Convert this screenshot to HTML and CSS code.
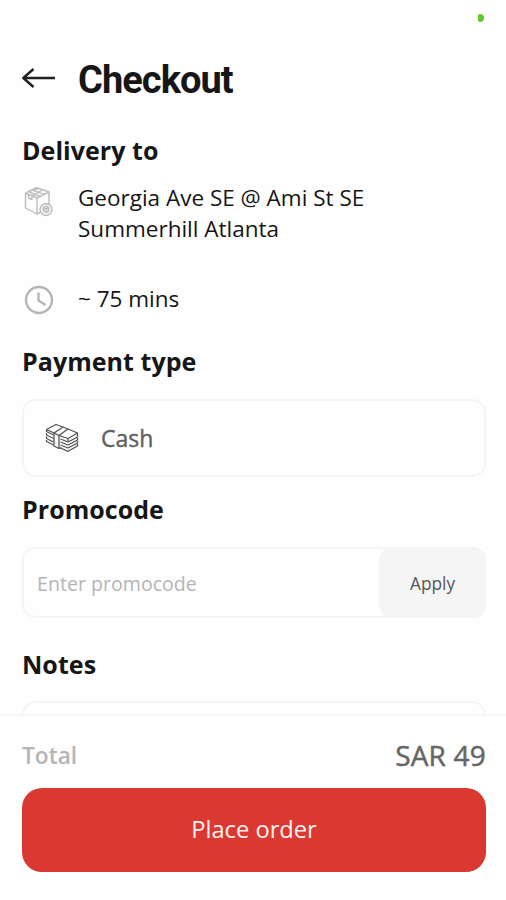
FILE: index.html
```html
<!DOCTYPE html>
<html lang="en">
<head>
<meta charset="utf-8">
<title>Checkout</title>
<link rel="stylesheet" href="styles.css">
</head>
<body>
<div class="screen">
  <div class="status"><span class="status-dot"></span></div>
  <main class="content">
    <header class="header">
      <svg class="back" width="34" height="22" viewBox="0 0 34 22"><path d="M33 11H1M11.5 2L1.3 11L11.5 20"/></svg>
      <h1>Checkout</h1>
    </header>
    <h2 class="delivery-title">Delivery to</h2>
    <div class="row address">
      <svg class="package" width="32" height="32" viewBox="0 0 32 32">
        <path d="M3.500 7L14 1.500L27 6V19M3.500 7V22L15 28V12L27 6M3.500 7L15 12M15 28L18 26.500M6.500 5.700L18 10.500M10 3.800L22 8.300M6.500 8.500V12L10 13.500V10L20.500 4M6.500 5.700L17 2.500"/>
        <circle class="badge" cx="24" cy="23.500" r="6"/>
        <path d="M21.500 21.500L24 20L26.500 21.500V25L24 26.500L21.500 25ZM24 23.200V26M21.500 21.500L24 23.200L26.500 21.500"/>
      </svg>
      <p>Georgia Ave SE @ Ami St SE<br><span class="city">Summerhill Atlanta</span></p>
    </div>
    <div class="row eta">
      <svg class="clock" width="32" height="32" viewBox="0 0 32 32"><circle cx="16" cy="16" r="13"/><path d="M15.500 8.500V16.500L22.500 21"/></svg>
      <p>~ 75 mins</p>
    </div>
    <h2 class="payment-title">Payment type</h2>
    <div class="card">
      <svg class="cash" width="34" height="30" viewBox="0 0 34 30">
        <path d="M1.500 6.500L11 1.500L18 4L9 10L1.500 6.500M18 4L23 6L14 12.500L9 10M23 6L32.500 10L23 15.500L14 12.500"/>
        <path d="M1.500 6.500V8.500L8.500 12M1.500 10V12L8.500 15.500M1.500 13.500V15.500L8.500 19M1.500 17V18.500L8.500 22"/>
        <path d="M9 10V23L14 25.500V12.500M14.500 25.500L16.500 24.500"/>
        <path d="M15.500 16L23 19L32.500 14V10M15.500 19L23 22L32.500 17V15M15.500 22L23 25L32.500 20V18M15.500 25L23 28.300L32.500 23V21M23 15.500V18"/>
      </svg>
      <span>Cash</span>
    </div>
    <h2 class="promo-title">Promocode</h2>
    <div class="promo">
      <span class="placeholder">Enter promocode</span>
      <span class="apply">Apply</span>
    </div>
    <h2 class="notes-title">Notes</h2>
    <div class="notes"></div>
  </main>
  <footer class="footer">
    <div class="total"><span class="total-label">Total</span><span class="amount">SAR 49</span></div>
    <div class="place"><span>Place order</span></div>
  </footer>
</div>
</body>
</html>
```
FILE: styles.css
```css
* { box-sizing: border-box; }
body { margin: 0; background: #fff; font-family: "Open Sans", sans-serif; color: #161616; }
h1, h2, p { margin: 0; font-weight: 400; white-space: nowrap; }
svg { display: block; flex: none; fill: none; stroke-linejoin: round; }
.screen { width: 506px; height: 900px; display: flex; flex-direction: column; overflow: hidden; background: #fefefe; }
.status { height: 36px; flex: none; display: flex; justify-content: flex-end; padding: 14px 22px 0 0; }
.status-dot { width: 6px; height: 8px; border-radius: 2px 4px 4px 2px; background: #5fc92d; }
.content { height: 678px; flex: none; overflow: hidden; padding: 0 20px 0 22px; }
.header { height: 86px; display: flex; align-items: center; gap: 22px; }
.back { stroke: #222; stroke-width: 2.4; position: relative; top: -1px; }
h1 { font: 700 38px/44px Roboto, sans-serif; letter-spacing: -0.95px; padding-top: 1px; }
h2 { font-size: 25px; line-height: 36px; font-weight: 700; letter-spacing: 0.05px; }
.delivery-title { margin-top: 10px; }
.row { display: flex; gap: 24px; font-size: 22.5px; line-height: 31px; }
.address { height: 62px; margin-top: 14px; }
.package { margin-top: 4px; stroke: #bdbdbd; stroke-width: 1.4; }
.badge { fill: #f0f0f0; }
.eta { margin-top: 39px; height: 32px; }
.clock { margin: 1px -1px 0 1px; stroke: #b5b5b5; stroke-width: 2.4; }
.payment-title { margin-top: 28px; }
.card { height: 78px; margin-top: 20px; border: 2px solid #f5f5f5; border-radius: 14px; display: flex; align-items: center; gap: 22px; padding-left: 21px; font-size: 23px; color: #5f5f5f; -webkit-text-stroke: 0.4px #5f5f5f; }
.cash { stroke: #555; stroke-width: 1.3; }
.promo-title { margin-top: 14px; }
.promo { height: 71px; margin-top: 20px; border: 2px solid #f5f5f5; border-radius: 13px; display: flex; align-items: center; justify-content: space-between; }
.placeholder { padding: 2px 0 0 13px; font-size: 19.6px; color: #b5b5b5; }
.apply { width: 107px; height: 71px; margin: 0 -2px; padding-top: 1px; flex: none; border-radius: 13px; background: #f5f5f5; display: flex; align-items: center; justify-content: center; font-size: 17.3px; color: #555; }
.notes-title { margin-top: 28px; }
.notes { height: 90px; margin-top: 19px; border: 2px solid #f5f5f5; border-radius: 14px; }
.footer { flex: 1; padding: 22px 20px 0 22px; border-top: 2px solid #f8f8f8; }
.total { height: 34px; display: flex; align-items: center; justify-content: space-between; }
.total-label { font-size: 22.7px; color: #b5b5b5; font-weight: 600; }
.amount { font-size: 28px; letter-spacing: 0.2px; color: #666; -webkit-text-stroke: 0.5px #666; }
.place { height: 84px; margin-top: 16px; border-radius: 20px; background: #dc3832; display: flex; align-items: center; justify-content: center; font-size: 23.7px; color: #fff3f2; }
.place span { margin-top: -2px; }
```
